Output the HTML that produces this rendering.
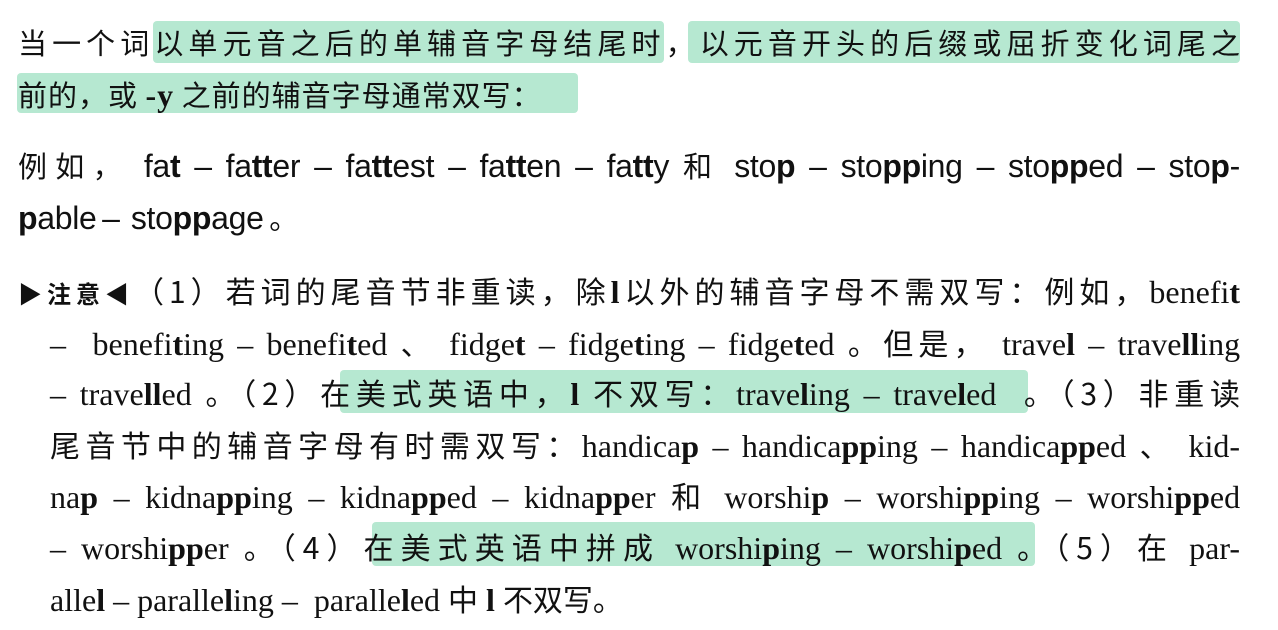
<!DOCTYPE html>
<html><head><meta charset="utf-8"><style>
body{margin:0;width:1278px;height:630px;background:#fff;position:relative;overflow:hidden;color:#111}
.hl{position:absolute;background:#b6e8d1;border-radius:4px}
.l{position:absolute;white-space:nowrap;font-size:32px;line-height:40px;font-family:"Liberation Serif","Noto Serif CJK SC",serif}
.j{text-align:justify;text-align-last:justify}
.s{font-family:"Liberation Sans","Noto Sans CJK SC",sans-serif;font-size:32px;letter-spacing:-0.3px;word-spacing:-3px}
.c{font-family:"Noto Sans CJK SC",sans-serif;font-size:29px;letter-spacing:0;word-spacing:0}
i{font-style:normal;font-family:"Noto Sans CJK SC",sans-serif;font-size:30px}
b{font-weight:bold}
</style></head><body>
<div class="hl" style="left:153px;top:21px;width:511px;height:42px"></div>
<div class="hl" style="left:688px;top:21px;width:552px;height:42px"></div>
<div class="hl" style="left:17px;top:73px;width:561px;height:40px"></div>
<div class="hl" style="left:340px;top:370px;width:688px;height:43px"></div>
<div class="hl" style="left:372px;top:522px;width:663px;height:44px"></div>

<div class="l j c" style="left:18px;top:22px;width:1222px">当一个词以单元音之后的单辅音字母结尾时，以元音开头的后缀或屈折变化词尾之</div>
<div class="l c" style="left:18px;top:74px;letter-spacing:1px">前的，或 <b style="font-family:'Liberation Serif';font-size:32px">-y</b> 之前的辅音字母通常双写：</div>
<div class="l j s" style="left:18px;top:145px;width:1222px"><span class="c">例如，</span> fa<b>t</b> – fa<b>tt</b>er – fa<b>tt</b>est – fa<b>tt</b>en – fa<b>tt</b>y <span class="c">和</span> sto<b>p</b> – sto<b>pp</b>ing – sto<b>pp</b>ed – sto<b>p</b>-</div>
<div class="l s" style="left:18px;top:197px"><b>p</b>able – &nbsp;sto<b>pp</b>age <span class="c">。</span></div>

<div class="l j" style="left:18px;top:270px;width:1222px"><b class="c" style="font-size:24px">▶注意◀</b><i>（1）若词的尾音节非重读，除</i><b>l</b><i>以外的辅音字母不需双写：例如，</i>benefi<b>t</b></div>
<div class="l j" style="left:50px;top:322px;width:1190px">– &nbsp;benefi<b>t</b>ing – benefi<b>t</b>ed <i>、</i> fidge<b>t</b> – fidge<b>t</b>ing – fidge<b>t</b>ed <i>。但是，</i> trave<b>l</b> – trave<b>ll</b>ing</div>
<div class="l j" style="left:50px;top:372px;width:1190px">– trave<b>ll</b>ed <i>。（2）在美式英语中，</i><b>l</b> <i>不双写：</i>trave<b>l</b>ing – trave<b>l</b>ed &nbsp;<i>。（3）非重读</i></div>
<div class="l j" style="left:50px;top:424px;width:1190px"><i>尾音节中的辅音字母有时需双写：</i>handica<b>p</b> – handica<b>pp</b>ing – handica<b>pp</b>ed <i>、</i> kid-</div>
<div class="l j" style="left:50px;top:475px;width:1190px">na<b>p</b> – kidna<b>pp</b>ing – kidna<b>pp</b>ed – kidna<b>pp</b>er <i>和</i> worshi<b>p</b> – worshi<b>pp</b>ing – worshi<b>pp</b>ed</div>
<div class="l j" style="left:50px;top:526px;width:1190px">– worshi<b>pp</b>er <i>。（4）在美式英语中拼成</i> worshi<b>p</b>ing – worshi<b>p</b>ed <i>。（5）在</i> par-</div>
<div class="l" style="left:50px;top:578px">alle<b>l</b> – paralle<b>l</b>ing – &nbsp;paralle<b>l</b>ed <i>中</i> <b>l</b> <i>不双写。</i></div>
</body></html>
